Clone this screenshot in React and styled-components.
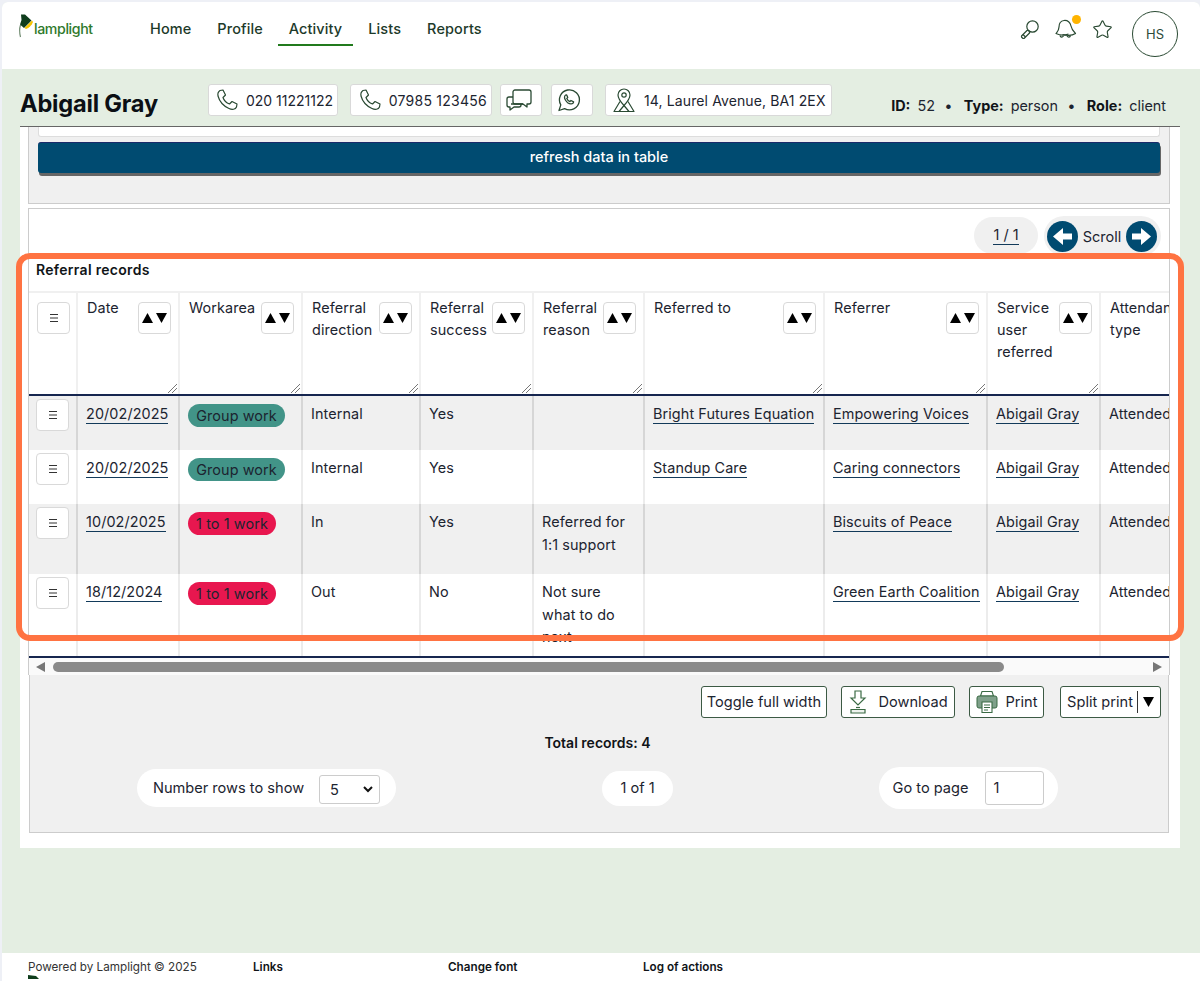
import React from "react";
import styled, { createGlobalStyle } from "styled-components";
import { Star } from "lucide-react";

const Global = createGlobalStyle`
  html, body { margin: 0; padding: 0; background: #eef0f6; }
  * { box-sizing: border-box; }
  body { font-family: Inter, "Noto Sans", sans-serif; color: #1c2430; font-size: 14px; }
`;

const Page = styled.div`
  position: relative;
  width: 1200px;
  height: 981px;
  overflow: hidden;
  padding: 2px 0 0 2px;
  display: flex;
  flex-direction: column;
`;
const Frame = styled.div`
  flex: 1;
  min-height: 0;
  display: flex;
  flex-direction: column;
  background: #e4eee2;
  border-radius: 6px 6px 0 0;
  overflow: hidden;
`;
const TopBar = styled.header`
  height: 67px;
  flex: none;
  background: #fff;
  display: flex;
  align-items: flex-start;
  padding: 0 22px 0 16px;
`;
const Logo = styled.div`
  width: 121px;
  display: flex;
  align-items: flex-end;
  padding-top: 12px;
  height: 36px;
`;
const LogoText = styled.span`
  font-size: 14.2px;
  font-weight: 500;
  color: #2f7a2c;
  letter-spacing: -0.4px;
  line-height: 18px;
`;
const Nav = styled.nav`
  display: flex;
  gap: 4px;
  flex: 1;
`;
const NavItem = styled.a`
  height: 44px;
  padding: 16px 11px 0;
  font-size: 14.5px;
  font-weight: 500;
  line-height: 21px;
  letter-spacing: 0.1px;
  color: #1d3a2a;
  border-bottom: 2px solid ${(p) => (p.$active ? "#217a1d" : "transparent")};
`;
const Tools = styled.div`
  display: flex;
  align-items: flex-start;
  padding-top: 9px;
  color: #2a4a33;
`;
const ToolIcon = styled.span`
  display: inline-flex;
  position: relative;
  margin: 8px ${(p) => p.$mr}px 0 0;
`;
const Dot = styled.span`
  position: absolute;
  top: -4px;
  right: -4px;
  width: 9px;
  height: 9px;
  border-radius: 50%;
  background: #ffb400;
`;
const Avatar = styled.div`
  width: 46px;
  height: 46px;
  border-radius: 50%;
  border: 1px solid #2a4a33;
  display: flex;
  align-items: center;
  justify-content: center;
  font-size: 13px;
  color: #2c4a3a;
`;
const SubBar = styled.div`
  height: 57px;
  flex: none;
  display: flex;
  align-items: flex-start;
  padding: 15px 34px 0 18px;
`;
const Name = styled.h1`
  width: 188px;
  margin: 6px 0 0;
  font-size: 23.6px;
  line-height: 28px;
  font-weight: 700;
  color: #0b0f14;
  letter-spacing: -0.2px;
  white-space: nowrap;
`;
const Chips = styled.div`
  display: flex;
  gap: 8px;
  flex: 1;
`;
const Chip = styled.div`
  height: 32px;
  background: #fff;
  border: 1px solid #d9d9d9;
  border-radius: 3px;
  display: flex;
  align-items: center;
  justify-content: ${(p) => (p.$icon ? "flex-start" : "flex-end")};
  gap: 7px;
  padding: ${(p) => (p.$icon ? "0 0 0 5px" : "0 4px 0 5px")};
  font-size: 14px;
  letter-spacing: ${(p) => p.$track || 0}px;
  white-space: nowrap;
  color: #1c2430;
  margin-left: ${(p) => p.$gap || 0}px;
  width: ${(p) => p.$w}px;
`;
const Meta = styled.div`
  display: flex;
  gap: 7px;
  font-size: 14.4px;
  padding-top: 12px;
  line-height: 20px;
  white-space: nowrap;
  b { font-weight: 700; color: #101418; }
`;
const Sep = styled.span`
  margin: 0 5px 0 3px;
  font-weight: 700;
`;
const Content = styled.main`
  width: 1160px;
  margin-left: 18px;
  height: 722px;
  flex: none;
  background: #fff;
  border-top: 1px solid #666;
  padding: 0 10px 0 8px;
`;
const FilterPanel = styled.section`
  height: 77px;
  background: #f0f0f0;
  border: 1px solid #ccc;
  border-top: 0;
  padding: 0 9px;
`;
const FieldStub = styled.div`
  height: 10px;
  background: #fff;
  border: 1px solid #ddd;
  border-top: 0;
  border-radius: 0 0 3px 3px;
`;
const RefreshButton = styled.button`
  display: block;
  width: 100%;
  height: 31px;
  margin-top: 5px;
  padding: 0 0 3px;
  background: #004b71;
  color: #fff;
  border: 0;
  border-top: 1px solid #1a2a6a;
  border-radius: 3px;
  box-shadow: 1px 3px 0 #666;
  font: 500 14.5px Inter, sans-serif;
`;
const TableCard = styled.section`
  margin-top: 4px;
  height: 467px;
  background: #fff;
  border: 1px solid #ccc;
  border-bottom: 0;
`;
const PagerRow = styled.div`
  height: 47px;
  display: flex;
  justify-content: flex-end;
  align-items: flex-start;
  gap: 6px;
  padding: 7px 8px 0 0;
  font-size: 14.5px;
`;
const PagePill = styled.div`
  width: 64px;
  height: 37px;
  margin-top: 1px;
  background: #f0f0f0;
  border-radius: 19px;
  display: flex;
  align-items: center;
  justify-content: center;
`;
const LinkText = styled.a`
  color: #1c2430;
  border-bottom: 1px solid #123a5a;
  line-height: 18px;
  display: inline-block;
  white-space: nowrap;
`;
const ScrollPill = styled.div`
  width: 117px;
  height: 40px;
  background: #f0f0f0;
  border-radius: 20px;
  display: flex;
  align-items: center;
  justify-content: space-between;
  padding: 0 4px 0 3px;
`;
const Title = styled.div`
  font-size: 14px;
  font-weight: 600;
  line-height: 16px;
  padding: 6px 0 0 7px;
  height: 35px;
  color: #101418;
  letter-spacing: 0.3px;
`;
const Scroller = styled.div`
  height: 367px;
  overflow: hidden;
  border-bottom: 2px solid #16264f;
`;
const Table = styled.table`
  table-layout: fixed;
  width: 1191px;
  border-collapse: collapse;
  font-size: 14.4px;
  letter-spacing: 0.1px;
`;
const Th = styled.th`
  position: relative;
  height: 103px;
  vertical-align: top;
  text-align: left;
  font-weight: 400;
  font-size: 14.4px;
  line-height: 22px;
  padding: 4px 9px;
  border-top: 2px solid #f0f0f0;
  border-right: 2px solid #f0f0f0;
  border-bottom: 2px solid #16264f;
  color: #1c2430;
`;
const HeadInner = styled.div`
  display: flex;
  justify-content: space-between;
  align-items: flex-start;
`;
const SortButton = styled.span`
  flex: none;
  width: 33px;
  height: 32px;
  margin: 5px -2px 0 0;
  background: #fff;
  border: 1px solid #d9d9d9;
  border-radius: 4px;
  display: flex;
  align-items: center;
  justify-content: center;
  gap: 3px;
`;
const MenuButton = styled.span`
  width: 33px;
  height: 32px;
  background: #fff;
  border: 1px solid #d9d9d9;
  border-radius: 4px;
  display: flex;
  align-items: center;
  justify-content: center;
  margin: ${(p) => (p.$head ? "5px 0 0 -1px" : "-4px 0 0 -1px")};
`;
const Grip = styled.svg`
  position: absolute;
  right: 1px;
  bottom: 1px;
`;
const Tr = styled.tr`
  height: ${(p) => p.$h}px;
  background: ${(p) => (p.$alt ? "#f0f0f0" : "#fff")};
`;
const Td = styled.td`
  vertical-align: top;
  padding: 7px 8px;
  line-height: 22.5px;
  overflow: hidden;
  border-right: 2px solid ${(p) => (p.$alt ? "#d6d6d6" : "#ececec")};
  color: #1c2430;
`;
const Badge = styled.span`
  display: inline-block;
  height: 23px;
  line-height: 23px;
  margin-top: 1px;
  text-align: center;
  width: ${(p) => (p.$red ? 88 : 97)}px;
  border-radius: 12px;
  white-space: nowrap;
  background: ${(p) => (p.$red ? "#e8174f" : "#429488")};
  color: #1c2430;
`;
const FakeScrollbar = styled.div`
  height: 17px;
  background: #fafafa;
  display: flex;
  align-items: center;
  padding: 0 7px;
  gap: 8px;
`;
const Thumb = styled.div`
  width: 951px;
  height: 10px;
  background: #8a8a8a;
  border-radius: 5px;
`;
const Spacer = styled.div`
  flex: 1;
`;
const BottomPanel = styled.section`
  height: 158px;
  background: #f0f0f0;
  border: 1px solid #ccc;
  border-top: 0;
  padding: 11px 7px 0 4px;
`;
const Actions = styled.div`
  display: flex;
  justify-content: flex-end;
  gap: 14px;
`;
const ActionButton = styled.button`
  height: 32px;
  background: #fff;
  border: 1px solid #3c5a44;
  border-radius: 3px;
  display: flex;
  align-items: center;
  justify-content: center;
  gap: ${(p) => p.$gap || 0}px;
  font: 400 14.6px Inter, sans-serif;
  color: #1c2430;
  padding: 0;
  white-space: nowrap;
  width: ${(p) => p.$w}px;
  margin-left: ${(p) => p.$ml || 0}px;
`;
const Divider = styled.span`
  width: 1px;
  height: 22px;
  background: #333;
  margin: 0 5px 0 4px;
`;
const Total = styled.div`
  text-align: center;
  font-weight: 600;
  font-size: 14px;
  line-height: 20px;
  margin-top: 15px;
  color: #101418;
`;
const PagerBottom = styled.div`
  display: flex;
  justify-content: space-around;
  align-items: center;
  height: 42px;
  margin-top: 14px;
`;
const WhitePill = styled.div`
  background: #fff;
  height: ${(p) => p.$h}px;
  width: ${(p) => p.$w}px;
  border-radius: 21px;
  display: flex;
  align-items: center;
  justify-content: center;
  gap: ${(p) => p.$gap || 0}px;
  font-size: 14.6px;
  white-space: nowrap;
`;
const FakeSelect = styled.div`
  width: 61px;
  height: 29px;
  margin-top: 3px;
  background: #fff;
  border: 1px solid #ccc;
  border-radius: 3px;
  display: flex;
  align-items: center;
  justify-content: space-between;
  padding: 0 6px 0 10px;
`;
const FakeInput = styled.div`
  width: 59px;
  height: 34px;
  background: #fff;
  border: 1px solid #ccc;
  border-radius: 3px;
  display: flex;
  align-items: center;
  padding-left: 7px;
`;
const Footer = styled.footer`
  margin-top: auto;
  height: 28px;
  flex: none;
  background: #fff;
  display: grid;
  grid-template-columns: 225px 195px 195px 1fr;
  padding: 7px 0 0 26px;
  font-size: 11.7px;
  line-height: 14px;
  overflow: hidden;
  color: #333;
`;
const FooterCell = styled.div`
  font-weight: ${(p) => (p.$bold ? 600 : 400)};
  color: ${(p) => (p.$bold ? "#101418" : "#333")};
  white-space: nowrap;
`;
const FooterLamp = styled.svg`
  display: block;
  margin-top: 1px;
`;
const Highlight = styled.div`
  position: absolute;
  left: 16px;
  top: 253px;
  width: 1168px;
  height: 388px;
  border: 6px solid #ff7342;
  border-radius: 14px;
  pointer-events: none;
`;

const GREEN = "#2a4a33";
const Tri = ({ down }) => (
  <svg width="11" height="10" viewBox="0 0 11 10"><path d={down ? "M0 0H11L5.5 10Z" : "M0 10H11L5.5 0Z"} fill="#000" /></svg>
);
const Sort = () => <SortButton><Tri /><Tri down /></SortButton>;
const Lines = () => (
  <svg width="8" height="8" viewBox="0 0 8 8"><path d="M0 .5H8M0 4H8M0 7.5H8" stroke="#333" strokeWidth="1" /></svg>
);
const GripIcon = () => (
  <Grip width="9" height="9" viewBox="0 0 9 9"><path d="M0 9L9 0M4 9L9 4" stroke="#777" strokeWidth="1" /></Grip>
);
const ArrowCircle = ({ right }) => (
  <svg width="31" height="31" viewBox="0 0 31 31">
    <circle cx="15.5" cy="15.5" r="15.5" fill="#004b71" />
    <path d={right ? "M6 12.5H15V7L25 15.5L15 24V18.5H6Z" : "M25 12.5H16V7L6 15.5L16 24V18.5H25Z"} fill="#fff" />
  </svg>
);
const Lamp = () => (
  <svg width="16" height="24" viewBox="0 0 16 24">
    <path d="M2.5 11C1.5 14 1.5 19 2.5 23" stroke="#6f8a6f" strokeWidth="1.2" fill="none" />
    <path d="M3 0.5H7L13.5 6.5L6 14L2 10.5L3.5 6Z" fill="#0f3d1c" />
    <path d="M14 6.5L15 8C14 11 11 14 8 15L6.5 14Z" fill="#f5c400" />
  </svg>
);
const PhoneIcon = () => (
  <svg width="24" height="24" viewBox="0 0 24 24" fill="none" stroke={GREEN} strokeWidth="1.2" strokeLinejoin="round">
    <path d="M5 2.5L8 2L10.5 7L8 9.5C9 12.5 11.5 15 14.5 16L17 13.5L22 16L21.5 19C20.5 21.5 17 22 14 20.5C8.5 18 4.5 13.5 3 8C2.5 5.5 3.5 3.5 5 2.5Z" />
  </svg>
);
const ChatIcon = () => (
  <svg width="26" height="24" viewBox="0 0 26 24" fill="none" stroke={GREEN} strokeWidth="1.3" strokeLinejoin="round">
    <path d="M9 2H23A2 2 0 0 1 25 4V14A2 2 0 0 1 23 16H21V19L17 16H9A2 2 0 0 1 7 14V4A2 2 0 0 1 9 2Z" />
    <path d="M7 9H3A2 2 0 0 0 1 11V17A2 2 0 0 0 3 19H4V22L8 19H13A2 2 0 0 0 15 17V16" />
    <path d="M5 16H17" />
  </svg>
);
const Whatsapp = () => (
  <svg width="24" height="24" viewBox="0 0 24 24" fill="none" stroke={GREEN} strokeWidth="1.3" strokeLinecap="round" strokeLinejoin="round">
    <path d="M2 22.5l1.8-5.6A10 10 0 1 1 7.6 20.6Z" />
    <path d="M8.8 7c-1.6.8-1.7 2.8-.4 5 1.4 2.4 3.5 4 5.7 3.9 1.3 0 2.4-.9 2.5-2.1l-2.6-1.3-1.1 1.1c-1.3-.5-2.5-1.7-3.1-3.1l1-1.1L9.7 7Z" />
  </svg>
);
const PinIcon = () => (
  <svg width="26" height="26" viewBox="0 0 26 26" fill="none" stroke={GREEN} strokeWidth="1.2" strokeLinejoin="round">
    <path d="M13 2a6 6 0 0 0-6 6c0 4 6 10.5 6 10.5S19 12 19 8a6 6 0 0 0-6-6Z" />
    <circle cx="13" cy="8" r="2.2" />
    <path d="M9 14.5L3 24.5H23L17 14.5" />
    <path d="M8 24.5L13 18.5L18 24.5" />
  </svg>
);
const SearchIcon = () => (
  <svg width="21" height="21" viewBox="0 0 21 21" fill="none" stroke={GREEN} strokeWidth="1.2">
    <circle cx="12.5" cy="7.5" r="5.7" />
    <path d="M8.5 11.5L7 11.5L1.5 17L1.5 18L3 19.5L4 19.5L9.5 14L9.5 12.5Z" strokeLinejoin="round" />
    <path d="M3 15.5L5.5 18" />
  </svg>
);
const BellsIcon = () => (
  <svg width="22" height="20" viewBox="0 0 22 20" fill="none" stroke={GREEN} strokeWidth="1.2" strokeLinejoin="round">
    <path d="M9 1.5C5.5 2 4 4.5 4 8C4 11 2.5 12.5 1 14.5C5 16.5 10 16.5 13.5 15" />
    <path d="M9 1.5C12.5 1 15.5 3.5 16 7C16.5 10 18 12 20.5 14.5C17.5 16.5 11.5 16.5 7.5 15.5" />
    <path d="M5 16.5C5.5 18.5 7.5 18.5 8.5 17M12 17C13 18.5 15 18.5 15.5 16.5" />
  </svg>
);
const DownloadIcon = () => (
  <svg width="20" height="26" viewBox="0 0 20 26" fill="none" stroke="#3a6a44" strokeWidth="1.2">
    <path d="M7 2H13V9H17L10 16L3 9H7Z" />
    <path d="M3 20.5H17V24H3Z" fill="#eef3ee" />
    <path d="M8 18.5H12" />
  </svg>
);
const PrintIcon = () => (
  <svg width="22" height="24" viewBox="0 0 22 24">
    <path d="M6 1.5H16L17.5 6H4.5Z" fill="#fff" stroke="#3a6a44" strokeWidth="1.1" />
    <path d="M3 6H19A2 2 0 0 1 21 8V16A2 2 0 0 1 19 18H3A2 2 0 0 1 1 16V8A2 2 0 0 1 3 6Z" fill="#7fa08a" stroke="#3a6a44" />
    <path d="M6 12H16V22.5H6Z" fill="#fff" stroke="#3a6a44" strokeWidth="1.1" />
    <path d="M8 15H14M8 17.5H14M8 20H12" stroke="#3a6a44" strokeWidth="1" />
  </svg>
);

const columns = [48, 102, 123, 118, 113, 111, 180, 163, 113, 120];
const heads = ["Date", "Workarea", "Referral direction", "Referral success", "Referral reason", "Referred to", "Referrer", "Service user referred", "Attendance type"];
const rows = [
  { h: 55, date: "20/02/2025", area: "Group work", dir: "Internal", ok: "Yes", reason: "", to: "Bright Futures Equation", by: "Empowering Voices", alt: true },
  { h: 54, date: "20/02/2025", area: "Group work", dir: "Internal", ok: "Yes", reason: "", to: "Standup Care", by: "Caring connectors" },
  { h: 70, date: "10/02/2025", area: "1 to 1 work", red: true, dir: "In", ok: "Yes", reason: "Referred for 1:1 support", to: "", by: "Biscuits of Peace", alt: true },
  { h: 84, date: "18/12/2024", area: "1 to 1 work", red: true, dir: "Out", ok: "No", reason: "Not sure what to do next", to: "", by: "Green Earth Coalition" },
];

export default function App() {
  return (
    <Page>
      <Global />
      <Frame>
        <TopBar>
          <Logo>
            <Lamp />
            <LogoText>lamplight</LogoText>
          </Logo>
          <Nav>
            <NavItem>Home</NavItem>
            <NavItem>Profile</NavItem>
            <NavItem $active>Activity</NavItem>
            <NavItem>Lists</NavItem>
            <NavItem>Reports</NavItem>
          </Nav>
          <Tools>
            <ToolIcon $mr={14}><SearchIcon /></ToolIcon>
            <ToolIcon $mr={15}><BellsIcon /><Dot /></ToolIcon>
            <ToolIcon $mr={19}><Star size={21} strokeWidth={1.3} /></ToolIcon>
            <Avatar>HS</Avatar>
          </Tools>
        </TopBar>
        <SubBar>
          <Name>Abigail Gray</Name>
          <Chips>
            <Chip $w={130}><PhoneIcon />020 11221122</Chip>
            <Chip $w={142} $gap={4} $track={0.25}><PhoneIcon />07985 123456</Chip>
            <Chip $w={42} $icon><ChatIcon /></Chip>
            <Chip $w={42} $gap={1} $icon><Whatsapp /></Chip>
            <Chip $w={227} $gap={4} $icon $track={0.12}><PinIcon />14, Laurel Avenue, BA1 2EX</Chip>
          </Chips>
          <Meta>
            <b>ID:</b> 52<Sep>•</Sep><b>Type:</b> person<Sep>•</Sep><b>Role:</b> client
          </Meta>
        </SubBar>
        <Content>
          <FilterPanel>
            <FieldStub />
            <RefreshButton>refresh data in table</RefreshButton>
          </FilterPanel>
          <TableCard>
            <PagerRow>
              <PagePill><LinkText>1 / 1</LinkText></PagePill>
              <ScrollPill><ArrowCircle />Scroll<ArrowCircle right /></ScrollPill>
            </PagerRow>
            <Title>Referral records</Title>
            <Scroller>
              <Table>
                <colgroup>{columns.map((w, i) => <col key={i} width={w} />)}</colgroup>
                <thead>
                  <tr>
                    <Th><MenuButton $head><Lines /></MenuButton></Th>
                    {heads.map((t, i) => (
                      <Th key={t}>
                        <HeadInner>
                          <span>{t}</span>
                          {i < 8 && <Sort />}
                        </HeadInner>
                        {i < 8 && <GripIcon />}
                      </Th>
                    ))}
                  </tr>
                </thead>
                <tbody>
                  {rows.map((r, i) => (
                    <Tr key={i} $h={r.h} $alt={r.alt}>
                      <Td $alt={r.alt}><MenuButton><Lines /></MenuButton></Td>
                      <Td $alt={r.alt}><LinkText>{r.date}</LinkText></Td>
                      <Td $alt={r.alt}><Badge $red={r.red}>{r.area}</Badge></Td>
                      <Td $alt={r.alt}>{r.dir}</Td>
                      <Td $alt={r.alt}>{r.ok}</Td>
                      <Td $alt={r.alt}>{r.reason}</Td>
                      <Td $alt={r.alt}>{r.to && <LinkText>{r.to}</LinkText>}</Td>
                      <Td $alt={r.alt}><LinkText>{r.by}</LinkText></Td>
                      <Td $alt={r.alt}><LinkText>Abigail Gray</LinkText></Td>
                      <Td $alt={r.alt}>Attended</Td>
                    </Tr>
                  ))}
                </tbody>
              </Table>
            </Scroller>
            <FakeScrollbar>
              <svg width="9" height="10" viewBox="0 0 9 10"><path d="M9 0V10L0 5Z" fill="#777" /></svg>
              <Thumb />
              <Spacer />
              <svg width="9" height="10" viewBox="0 0 9 10"><path d="M0 0V10L9 5Z" fill="#777" /></svg>
            </FakeScrollbar>
            <BottomPanel>
              <Actions>
                <ActionButton $w={126}>Toggle full width</ActionButton>
                <ActionButton $w={114} $gap={10}><DownloadIcon />Download</ActionButton>
                <ActionButton $w={75} $gap={8}><PrintIcon />Print</ActionButton>
                <ActionButton $w={101} $ml={2}>Split print<Divider /><Tri down /></ActionButton>
              </Actions>
              <Total>Total records: 4</Total>
              <PagerBottom>
                <WhitePill $w={259} $h={38} $gap={15}>
                  Number rows to show
                  <FakeSelect>5
                    <svg width="10" height="7" viewBox="0 0 10 7"><path d="M1 1L5 5L9 1" stroke="#111" strokeWidth="2" fill="none" /></svg>
                  </FakeSelect>
                </WhitePill>
                <WhitePill $w={71} $h={35}>1 of 1</WhitePill>
                <WhitePill $w={179} $h={42} $gap={17}>Go to page<FakeInput>1</FakeInput></WhitePill>
              </PagerBottom>
            </BottomPanel>
          </TableCard>
        </Content>
        <Footer>
          <FooterCell>Powered by Lamplight © 2025
            <FooterLamp width="12" height="8" viewBox="0 0 12 8"><path d="M0 0L8 1L11 4H0Z" fill="#0f3d1c" /></FooterLamp>
          </FooterCell>
          <FooterCell $bold>Links</FooterCell>
          <FooterCell $bold>Change font</FooterCell>
          <FooterCell $bold>Log of actions</FooterCell>
        </Footer>
      </Frame>
      <Highlight />
    </Page>
  );
}
